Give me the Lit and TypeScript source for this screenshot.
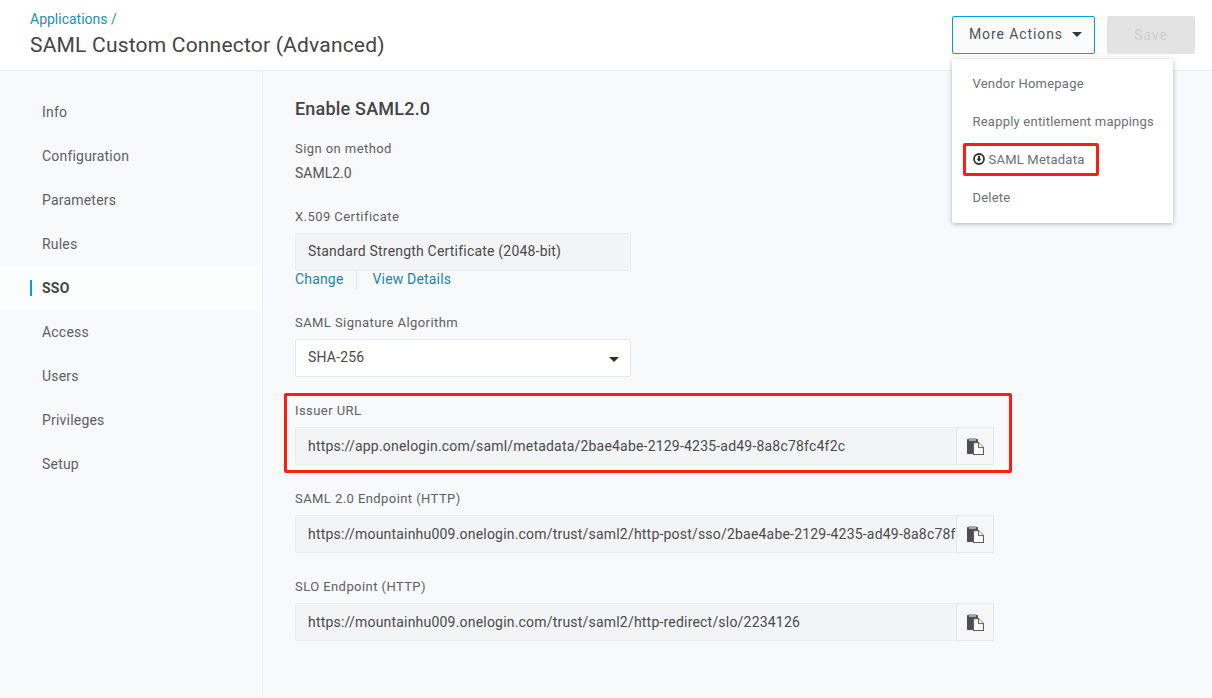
import { LitElement, html, css } from "lit";
import { customElement } from "lit/decorators.js";

const navItems = ["Info", "Configuration", "Parameters", "Rules", "SSO", "Access", "Users", "Privileges", "Setup"];
const copyIcon = html`<svg width="17" height="17" viewBox="0 0 17 17"><path fill="#4b4f56" d="M0 2c0-.6.4-1 1-1h9c.6 0 1 .4 1 1v3H6v11H1c-.6 0-1-.4-1-1z"/><rect x="2" y="0" width="7" height="3" rx=".5" fill="#a3a6aa"/><path fill="#fff" stroke="#6d5c50" stroke-width="1.100" d="M6.500 4.600h5l5 5v6.900h-10z"/><path fill="#fff" stroke="#6d5c50" d="M11.500 4.600v5h5"/></svg>`;

@customElement("app-root")
export class AppRoot extends LitElement {
  static styles = css`
    :host { display: block; position: relative; width: 1212px; height: 698px; overflow: hidden; background: #f8f9fa; font-family: Roboto, "Liberation Sans", sans-serif; color: #4a4a4a; letter-spacing: 0.2px; }
    .header { box-sizing: border-box; height: 71px; background: #fff; border-bottom: 1px solid #e8eaec; display: flex; justify-content: space-between; padding: 11px 17px 0 30px; }
    .crumb { font-size: 14px; line-height: 17px; color: #2191b5; letter-spacing: 0; }
    .title { font-size: 21px; line-height: 24px; margin-top: 5px; color: #444; letter-spacing: 0.2px; }
    .actions { display: flex; gap: 12px; padding-top: 5px; align-items: flex-start; }
    .more { box-sizing: border-box; width: 143px; height: 38px; border: 1px solid #00a3d9; border-radius: 2px; background: #fafbfb; display: flex; align-items: center; padding: 0 0 2px 16px; gap: 9px; font-size: 14px; letter-spacing: 0.9px; color: #50545a; }
    .caret { width: 0; height: 0; border-left: 5px solid transparent; border-right: 5px solid transparent; border-top: 5px solid #33363a; }
    .save { box-sizing: border-box; width: 88px; height: 38px; border-radius: 2px; background: #e3e3e3; color: #cfcfcf; display: flex; align-items: center; justify-content: center; font-size: 14px; letter-spacing: 0.9px; }
    .body { display: flex; height: 627px; }
    .side { box-sizing: border-box; width: 263px; border-right: 1px solid #eff0f2; padding-top: 19px; flex: none; }
    .nav { height: 44px; display: flex; align-items: center; padding-left: 42px; font-size: 14px; color: #5d6066; position: relative; }
    .nav.active { background: #fbfcfc; font-weight: 700; color: #444; }
    .nav.active::before { content: ""; position: absolute; left: 30px; top: 14px; width: 2px; height: 16px; background: #00a3d9; }
    .main { flex: 1; padding: 27px 0 0 32px; }
    h2 { margin: 0; font-size: 18px; line-height: 22px; font-weight: 500; color: #444; letter-spacing: 0.2px; }
    .label { font-size: 13px; line-height: 17px; color: #5d6066; letter-spacing: 0.43px; }
    .plain { font-size: 14px; line-height: 17px; margin-top: 8px; color: #555; letter-spacing: 0; }
    .box { box-sizing: border-box; height: 38px; display: flex; align-items: center; padding: 0 12px; font-size: 14px; border: 1px solid #ebecee; border-radius: 2px; background: #f3f4f5; color: #4a4a4a; white-space: nowrap; overflow: hidden; letter-spacing: 0.2px; }
    .narrow { width: 336px; padding-bottom: 2px; }
    .sec1 { margin-top: 20px; }
    .sec2 { margin-top: 26px; }
    .sec2 .box, .sec3 .box { margin-top: 8px; }
    .links { display: flex; font-size: 14px; color: #1b86ac; line-height: 16px; height: 18px; letter-spacing: 0.17px; }
    .links span:first-child { padding-right: 13px; border-right: 1px solid #e8e9eb; height: 18px; }
    .links span:last-child { padding-left: 15px; }
    .sec3 { margin-top: 25px; }
    .select { background: #fff; justify-content: space-between; padding-right: 11px; border-color: #e6e7e9; }
    .select .caret { border-top-color: #332a22; margin-top: 4px; }
    .sec4 { margin-top: 25px; }
    .sec5 { margin-top: 25px; }
    .input-row { display: flex; width: 699px; height: 38px; margin-top: 8px; }
    .input-row .box { flex: 1; min-width: 0; margin: 0; border-right: 0; border-radius: 2px 0 0 2px; padding-right: 0; }
    .url { display: block; overflow: hidden; }
    .copy { box-sizing: border-box; width: 38px; flex: none; border: 1px solid #e6e7e9; border-radius: 0 2px 2px 0; background: #f6f7f8; display: flex; align-items: center; justify-content: center; }
    .menu { position: absolute; left: 952px; top: 59px; width: 221px; height: 164px; background: #fff; border-radius: 2px; box-shadow: 0 1px 5px rgba(0,0,0,.28); padding-top: 5px; box-sizing: border-box; }
    .item { height: 38px; display: flex; align-items: center; padding-left: 20.5px; gap: 4px; font-size: 13px; color: #6c6f73; letter-spacing: 0.22px; white-space: nowrap; }
    .item svg { flex: none; }
    .mark { position: absolute; box-sizing: border-box; border: 3px solid #fb1e12; border-radius: 2px; pointer-events: none; }
    .mark.issuer { left: 284px; top: 393px; width: 728px; height: 80px; }
    .mark.meta { left: 963px; top: 143px; width: 136px; height: 33px; }
  `;

  private field(label: string, url: string, cls: string) {
    return html`<div class=${cls}>
      <div class="label">${label}</div>
      <div class="input-row"><div class="box"><span class="url">${url}</span></div><div class="copy">${copyIcon}</div></div>
    </div>`;
  }

  render() {
    return html`
      <div class="header">
        <div>
          <div class="crumb">Applications /</div>
          <div class="title">SAML Custom Connector (Advanced)</div>
        </div>
        <div class="actions">
          <div class="more">More Actions <span class="caret"></span></div>
          <div class="save">Save</div>
        </div>
      </div>
      <div class="body">
        <div class="side">
          ${navItems.map((n) => html`<div class="nav ${n === "SSO" ? "active" : ""}">${n}</div>`)}
        </div>
        <div class="main">
          <h2>Enable SAML2.0</h2>
          <div class="sec1">
            <div class="label">Sign on method</div>
            <div class="plain">SAML2.0</div>
          </div>
          <div class="sec2">
            <div class="label">X.509 Certificate</div>
            <div class="box narrow">Standard Strength Certificate (2048-bit)</div>
            <div class="links"><span>Change</span><span>View Details</span></div>
          </div>
          <div class="sec3">
            <div class="label">SAML Signature Algorithm</div>
            <div class="box narrow select">SHA-256 <span class="caret"></span></div>
          </div>
          ${this.field("Issuer URL", "https://app.onelogin.com/saml/metadata/2bae4abe-2129-4235-ad49-8a8c78fc4f2c", "sec4")}
          ${this.field("SAML 2.0 Endpoint (HTTP)", "https://mountainhu009.onelogin.com/trust/saml2/http-post/sso/2bae4abe-2129-4235-ad49-8a8c78fc4f2c", "sec5")}
          ${this.field("SLO Endpoint (HTTP)", "https://mountainhu009.onelogin.com/trust/saml2/http-redirect/slo/2234126", "sec5")}
        </div>
      </div>
      <div class="menu">
        <div class="item">Vendor Homepage</div>
        <div class="item">Reapply entitlement mappings</div>
        <div class="item">
          <svg width="12" height="12" viewBox="0 0 12 12"><circle cx="6" cy="6" r="5" fill="none" stroke="#333" stroke-width="1.800"/><path fill="#333" d="M5 2.800h2v3h1.500L6 8.800 3.500 5.800H5z"/></svg>
          SAML Metadata
        </div>
        <div class="item">Delete</div>
      </div>
      <div class="mark issuer"></div>
      <div class="mark meta"></div>
    `;
  }
}
